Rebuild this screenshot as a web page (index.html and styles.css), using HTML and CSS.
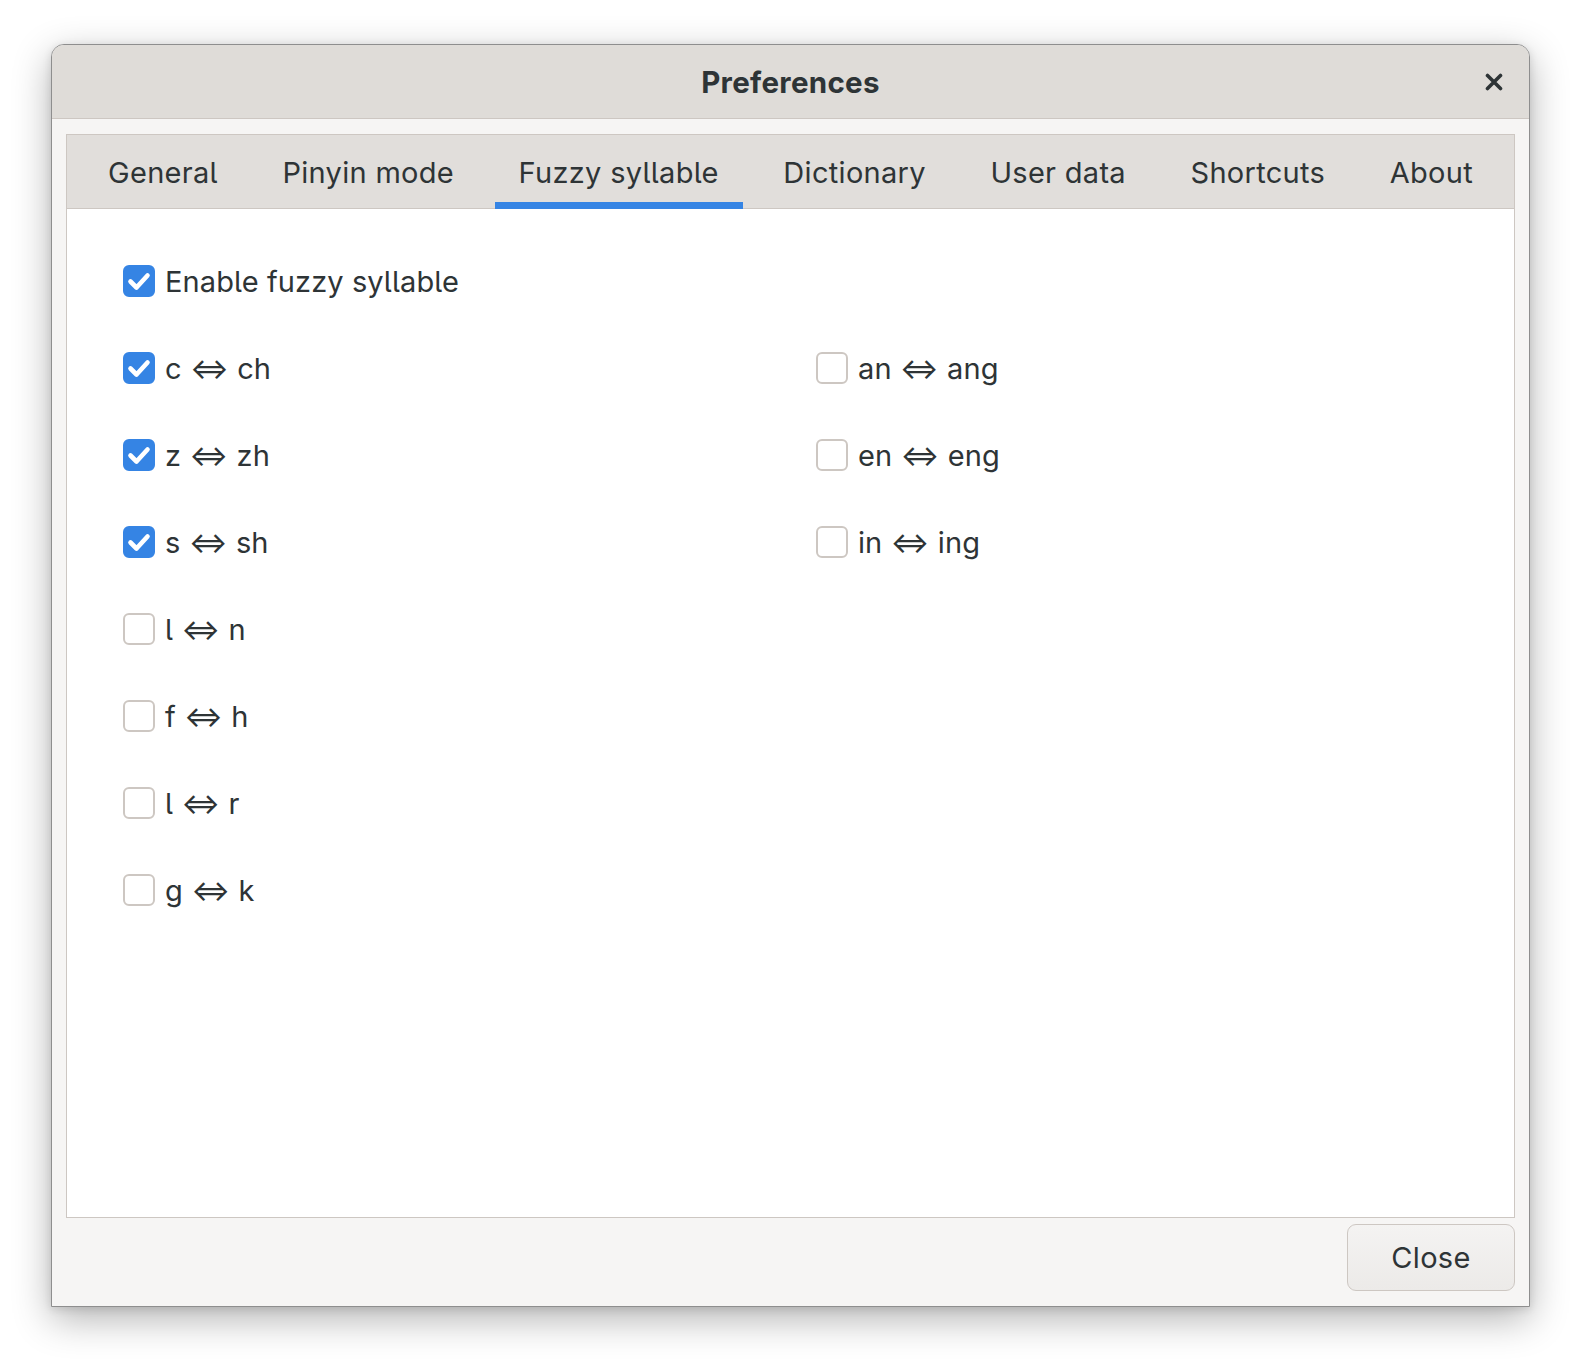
FILE: index.html
```html
<!DOCTYPE html>
<html lang="en">
<head>
    <meta charset="UTF-8">
    <title>Preferences</title>
    <link rel="stylesheet" href="styles.css">
</head>
<body>
    <div class="dialog">
        <header class="titlebar">
            <span class="title">Preferences</span>
            <button class="close-x" aria-label="Close">
                <svg width="18" height="18" viewBox="0 0 18 18"><path d="M2.5 2.5L15.5 15.5M15.5 2.5L2.5 15.5" stroke="#2e3436" stroke-width="3.6" stroke-linecap="round"/></svg>
            </button>
        </header>
        <div class="content">
            <div class="notebook">
                <nav class="tabs">
                    <span class="tab">General</span>
                    <span class="tab">Pinyin mode</span>
                    <span class="tab active">Fuzzy syllable</span>
                    <span class="tab">Dictionary</span>
                    <span class="tab">User data</span>
                    <span class="tab">Shortcuts</span>
                    <span class="tab">About</span>
                </nav>
                <div class="page">
                    <label class="check on"><span class="box"><svg width="32" height="32" viewBox="0 0 32 32"><path d="M7.5 16.5L13.5 22.5L24.5 10.5" fill="none" stroke="#fff" stroke-width="4.6" stroke-linecap="round" stroke-linejoin="round"/></svg></span>Enable fuzzy syllable</label>
                    <div class="pairs">
                        <label class="check on"><span class="box"><svg width="32" height="32" viewBox="0 0 32 32"><path d="M7.5 16.5L13.5 22.5L24.5 10.5" fill="none" stroke="#fff" stroke-width="4.6" stroke-linecap="round" stroke-linejoin="round"/></svg></span>c ⇔ ch</label>
                        <label class="check"><span class="box"></span>an ⇔ ang</label>
                        <label class="check on"><span class="box"><svg width="32" height="32" viewBox="0 0 32 32"><path d="M7.5 16.5L13.5 22.5L24.5 10.5" fill="none" stroke="#fff" stroke-width="4.6" stroke-linecap="round" stroke-linejoin="round"/></svg></span>z ⇔ zh</label>
                        <label class="check"><span class="box"></span>en ⇔ eng</label>
                        <label class="check on"><span class="box"><svg width="32" height="32" viewBox="0 0 32 32"><path d="M7.5 16.5L13.5 22.5L24.5 10.5" fill="none" stroke="#fff" stroke-width="4.6" stroke-linecap="round" stroke-linejoin="round"/></svg></span>s ⇔ sh</label>
                        <label class="check"><span class="box"></span>in ⇔ ing</label>
                        <label class="check"><span class="box"></span>l ⇔ n</label>
                        <span></span>
                        <label class="check"><span class="box"></span>f ⇔ h</label>
                        <span></span>
                        <label class="check"><span class="box"></span>l ⇔ r</label>
                        <span></span>
                        <label class="check"><span class="box"></span>g ⇔ k</label>
                        <span></span>
                    </div>
                </div>
            </div>
            <div class="actions">
                <button class="btn">Close</button>
            </div>
        </div>
    </div>
</body>
</html>
```

FILE: styles.css
```css
html {
    background: #ffffff;
}
body {
    margin: 0;
    min-height: 100vh;
    padding: 44px 0 0 51px;
    box-sizing: border-box;
    font-family: Inter, "Noto Sans", sans-serif;
    font-feature-settings: "cv05" 1;
    color: #2e3436;
    letter-spacing: 0.3px;
}
.dialog {
    width: 1477px;
    height: 1261px;
    border: 1px solid #8e8e8e;
    border-radius: 13px 13px 0 0;
    background: #f6f5f4;
    box-shadow: 0 12px 38px rgba(0, 0, 0, 0.3), 0 2px 8px rgba(0, 0, 0, 0.12);
    display: flex;
    flex-direction: column;
    overflow: hidden;
}
.titlebar {
    position: relative;
    height: 73px;
    flex: none;
    background: #dfdcd8;
    border-bottom: 1px solid #cdc7c2;
    display: flex;
    align-items: center;
    justify-content: center;
}
.title {
    font-size: 29.5px;
    font-weight: 700;
    color: #2e3436;
}
.close-x {
    position: absolute;
    right: 26px;
    top: 28px;
    width: 18px;
    height: 18px;
    padding: 0;
    border: none;
    background: none;
}
.close-x svg { display: block; }
.content {
    flex: 1;
    display: flex;
    flex-direction: column;
    padding: 15px 14px 15px;
}
.notebook {
    height: 1082px;
    border: 1px solid #cdc7c2;
    display: flex;
    flex-direction: column;
}
.tabs {
    height: 73px;
    flex: none;
    background: #e1dedb;
    border-bottom: 1px solid #cdc7c2;
    display: flex;
    justify-content: space-between;
    padding: 0 17px;
}
.tab {
    position: relative;
    padding: 0 24px;
    display: flex;
    align-items: center;
    font-size: 29px;
    padding-top: 1px;
}
.tab.active::after {
    content: "";
    position: absolute;
    left: 0;
    right: 0;
    bottom: -1px;
    height: 7px;
    background: #3584e4;
}
.page {
    flex: 1;
    background: #ffffff;
    padding: 56px 56px;
}
.check {
    display: flex;
    align-items: center;
    height: 32px;
    font-size: 29px;
    letter-spacing: 0.1px;
    white-space: nowrap;
}
.box {
    width: 28px;
    height: 28px;
    flex: none;
    margin-right: 10px;
    border: 2px solid #cdc7c2;
    border-radius: 6px;
    background: #ffffff;
    position: relative;
}
.check.on .box {
    background: #3584e4;
    border-color: #3584e4;
}
.box svg {
    position: absolute;
    left: -2px;
    top: -2px;
}
.pairs {
    margin-top: 55px;
    display: grid;
    grid-template-columns: 693px 1fr;
    grid-template-rows: repeat(7, 32px);
    row-gap: 55px;
}
.actions {
    display: flex;
    justify-content: flex-end;
    margin-top: 6px;
}
.btn {
    width: 168px;
    height: 67px;
    font-family: inherit;
    font-size: 29px;
    letter-spacing: 0.3px;
    color: #2e3436;
    background: linear-gradient(#f4f3f2, #eceae8);
    border: 1.5px solid #cdc7c2;
    border-radius: 9px;
}
```
